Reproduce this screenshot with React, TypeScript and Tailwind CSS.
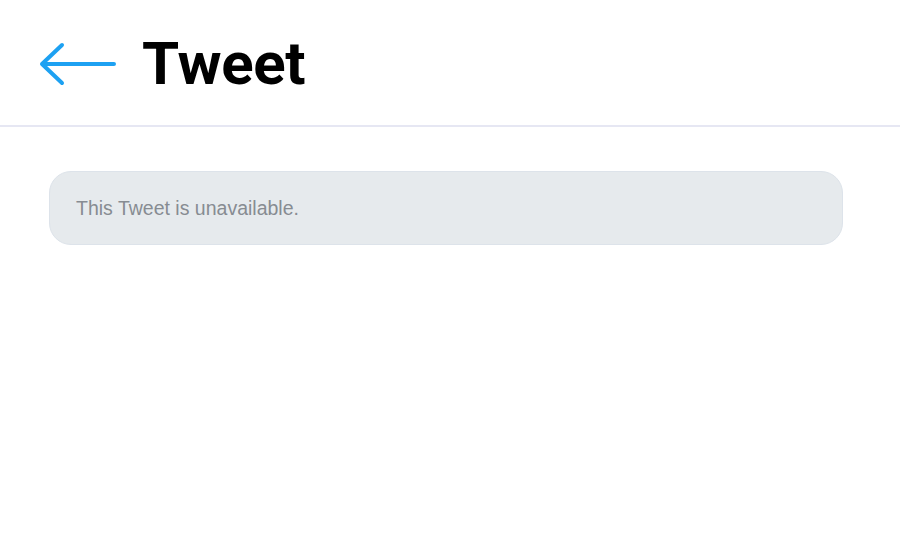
export default function App() {
  return (
    <div className="w-[900px] h-[540px] bg-white overflow-hidden" style={{ fontFamily: 'Roboto, sans-serif' }}>
      <div className="h-[127px] flex items-center border-b-2 border-[#e6e7f3] pl-[38px]">
        <svg width="80" height="44" viewBox="0 0 80 44" className="mt-[3px]">
          <path d="M24 3 L4 22 L24 41 M4 22 H76" fill="none" stroke="#1da1f2" strokeWidth="4" strokeLinecap="round" strokeLinejoin="round" />
        </svg>
        <h1 className="ml-[24px] mt-[2px] text-[60px] font-bold text-black leading-none tracking-[-0.3px]">Tweet</h1>
      </div>
      <div className="pl-[49px] pr-[57px] pt-[44px]">
        <div className="h-[74px] flex items-center rounded-[22px] bg-[#e6eaed] border border-[#dde3ea] px-[26px]">
          <p className="text-[19.5px] text-[#878c92] mt-[1px]" style={{ fontFamily: '"Liberation Sans", Arial, sans-serif' }}>
            This Tweet is unavailable.
          </p>
        </div>
      </div>
    </div>
  );
}
